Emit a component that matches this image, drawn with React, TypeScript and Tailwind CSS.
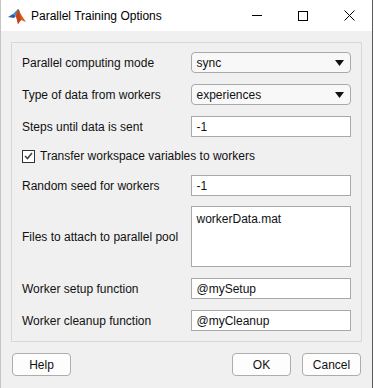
import React from 'react'

function Row({ label, children, className = '' }: { label: string; children: React.ReactNode; className?: string }) {
  return (
    <div className={`flex items-center ${className}`}>
      <div className="w-[170px] text-[12px] text-[#111]">{label}</div>
      {children}
    </div>
  )
}

function Dropdown({ value }: { value: string }) {
  return (
    <div className="flex h-[21px] w-[160px] items-center justify-between rounded-[4px] border border-[#a9a9a9] bg-[#f8f8f8] pl-[4px] pr-[6px] text-[12px] text-[#111]">
      <span>{value}</span>
      <svg width="9" height="6" viewBox="0 0 9 6">
        <path d="M0 0h9L4.5 6z" fill="#111" />
      </svg>
    </div>
  )
}

function Field({ value, tall = false }: { value: string; tall?: boolean }) {
  return (
    <div
      className={`flex w-[160px] border border-[#a9a9a9] bg-white px-[4px] text-[12px] text-[#111] ${
        tall ? 'h-[61px] items-start pt-[3px]' : 'h-[21px] items-center'
      }`}
    >
      {value}
    </div>
  )
}

function Button({ children, className = '' }: { children: React.ReactNode; className?: string }) {
  return (
    <button className={`flex h-[23px] w-[59px] items-center justify-center rounded-[4px] border border-[#adadad] bg-[#fdfdfd] text-[12px] text-[#111] ${className}`}>
      {children}
    </button>
  )
}

export default function App() {
  return (
    <div className="flex h-[388px] w-[373px] flex-col border-l border-r border-l-[#c4c4c4] border-r-[#5a5a5a] bg-[#f0f0f0] font-['Liberation_Sans',Arial,sans-serif]">
      {/* title bar */}
      <div className="flex h-[31px] items-center bg-white">
        <svg className="ml-[7px]" width="18" height="16" viewBox="0 0 18 16">
          <path d="M0 9 L5 6 L8 8 L6 10z" fill="#2a5b9c" />
          <path d="M5 6 L10 1 L12 3 L8 8z" fill="#3d8ad1" />
          <path d="M10 1 L14 8 L18 14 L13 12 L10 16 L8 8z" fill="#e35c1a" />
          <path d="M10 1 L12 6 L13 12 L10 16 L8 8z" fill="#c1441a" />
        </svg>
        <span className="ml-[5px] text-[12px] text-black">Parallel Training Options</span>
        <div className="ml-auto flex items-center">
          <div className="flex w-[46px] justify-center">
            <div className="h-px w-[10px] bg-black" />
          </div>
          <div className="flex w-[46px] justify-center">
            <div className="h-[10px] w-[10px] border border-black" />
          </div>
          <div className="flex w-[46px] justify-center">
            <svg width="11" height="11" viewBox="0 0 11 11">
              <path d="M0.5 0.5L10.5 10.5M10.5 0.5L0.5 10.5" stroke="black" strokeWidth="1" />
            </svg>
          </div>
        </div>
      </div>

      {/* options panel */}
      <div className="mx-[10px] mt-[11px] flex flex-col gap-[11px] border border-[#d7d7d7] pb-[10px] pl-[10px] pr-[10px] pt-[9px]">
        <Row label="Parallel computing mode">
          <Dropdown value="sync" />
        </Row>
        <Row label="Type of data from workers">
          <Dropdown value="experiences" />
        </Row>
        <Row label="Steps until data is sent">
          <Field value="-1" />
        </Row>
        <div className="flex h-[16px] items-center">
          <div className="flex h-[13px] w-[13px] items-center justify-center border border-[#333] bg-white">
            <svg width="9" height="8" viewBox="0 0 9 8">
              <path d="M1 4 L3.5 6.5 L8 1" fill="none" stroke="#444" strokeWidth="1.6" />
            </svg>
          </div>
          <span className="ml-[5px] text-[12px] text-[#111]">Transfer workspace variables to workers</span>
        </div>
        <Row label="Random seed for workers">
          <Field value="-1" />
        </Row>
        <Row label="Files to attach to parallel pool" className="-mt-px">
          <Field value="workerData.mat" tall />
        </Row>
        <Row label="Worker setup function">
          <Field value="@mySetup" />
        </Row>
        <Row label="Worker cleanup function">
          <Field value="@myCleanup" />
        </Row>
      </div>

      {/* buttons */}
      <div className="mx-[11px] mt-[11px] flex">
        <Button>Help</Button>
        <Button className="ml-auto">OK</Button>
        <Button className="ml-[11px]">Cancel</Button>
      </div>
    </div>
  )
}
